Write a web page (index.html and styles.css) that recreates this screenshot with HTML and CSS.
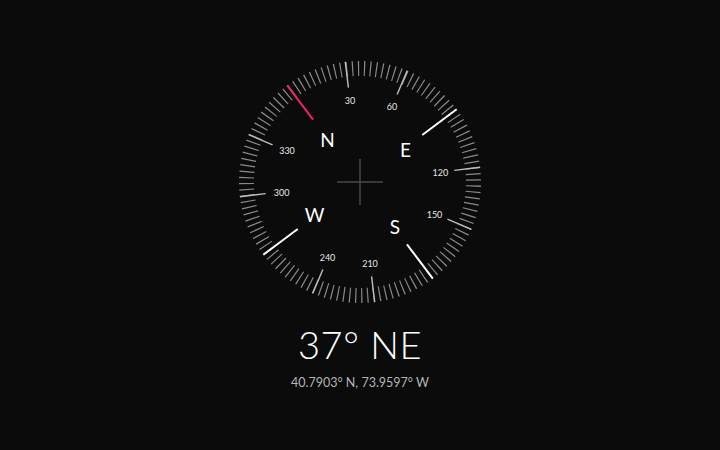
FILE: index.html
```html
<!DOCTYPE html>
<html lang="en">
<head>
<meta charset="utf-8">
<title>Compass</title>
<link rel="stylesheet" href="styles.css">
</head>
<body>
<main class="compass-page">
  <svg class="dial" width="260" height="260" viewBox="-130 -130 260 260" aria-label="Compass dial">
    <g class="rose" transform="rotate(-37)">
      <circle class="minor-ticks" r="113.5" />
      <g class="mid-ticks">
        <line x1="0" y1="-121" x2="0" y2="-95" transform="rotate(30)"/>
        <line x1="0" y1="-121" x2="0" y2="-95" transform="rotate(60)"/>
        <line x1="0" y1="-121" x2="0" y2="-95" transform="rotate(120)"/>
        <line x1="0" y1="-121" x2="0" y2="-95" transform="rotate(150)"/>
        <line x1="0" y1="-121" x2="0" y2="-95" transform="rotate(210)"/>
        <line x1="0" y1="-121" x2="0" y2="-95" transform="rotate(240)"/>
        <line x1="0" y1="-121" x2="0" y2="-95" transform="rotate(300)"/>
        <line x1="0" y1="-121" x2="0" y2="-95" transform="rotate(330)"/>
      </g>
      <g class="cardinal-ticks">
        <line x1="0" y1="-121" x2="0" y2="-78" transform="rotate(90)"/>
        <line x1="0" y1="-121" x2="0" y2="-78" transform="rotate(180)"/>
        <line x1="0" y1="-121" x2="0" y2="-78" transform="rotate(270)"/>
      </g>
      <line class="north-tick" x1="0" y1="-121" x2="0" y2="-78"/>
    </g>
    <g class="degrees">
      <text x="-10" y="-81.4">30</text>
      <text x="32" y="-75.5">60</text>
      <text x="80.4" y="-10">120</text>
      <text x="74.5" y="32">150</text>
      <text x="10" y="81.4">210</text>
      <text x="-32.5" y="75">240</text>
      <text x="-78.4" y="10">300</text>
      <text x="-73" y="-32">330</text>
    </g>
    <g class="cardinals">
      <text x="-32.5" y="-43">N</text>
      <text x="45.5" y="-32.5">E</text>
      <text x="35" y="44.5">S</text>
      <text x="-45.5" y="32.5">W</text>
    </g>
    <g class="crosshair">
      <line x1="-23" y1="0" x2="23" y2="0"/>
      <line x1="0" y1="-23" x2="0" y2="23"/>
    </g>
  </svg>
  <h1 class="heading">37° NE</h1>
  <p class="coords">40.7903° N, 73.9597° W</p>
</main>
</body>
</html>
```
FILE: styles.css
```css
html, body {
  margin: 0;
  padding: 0;
  background: #0b0b0c;
}

body {
  width: 720px;
  height: 450px;
  overflow: hidden;
  font-family: "Lato", "Noto Sans", sans-serif;
  color: #fff;
}

.compass-page {
  display: flex;
  flex-direction: column;
  align-items: center;
  padding-top: 52px;
}

.dial {
  display: block;
}

.minor-ticks {
  fill: none;
  stroke: #8a8a8a;
  stroke-width: 15;
  stroke-dasharray: 1.2 4.7428;
  stroke-dashoffset: 0.6;
}

.mid-ticks line {
  stroke: #bdbdbd;
  stroke-width: 1.4;
}

.cardinal-ticks line {
  stroke: #ffffff;
  stroke-width: 2;
}

.north-tick {
  stroke: #e8285c;
  stroke-width: 2;
}

.degrees text {
  fill: #e6e6e6;
  font-size: 9px;
  text-anchor: middle;
  dominant-baseline: central;
}

.cardinals text {
  fill: #ffffff;
  font-size: 19px;
  text-anchor: middle;
  dominant-baseline: central;
}

.crosshair line {
  stroke: #4a4a4a;
  stroke-width: 1.5;
}

.heading {
  margin: 9px 0 0;
  font-size: 38px;
  font-weight: 300;
  line-height: 46px;
  letter-spacing: 0.5px;
  color: #ffffff;
}

.coords {
  margin: 8px 0 0;
  font-size: 12.5px;
  line-height: 16px;
  color: #b4b4b4;
}
```
